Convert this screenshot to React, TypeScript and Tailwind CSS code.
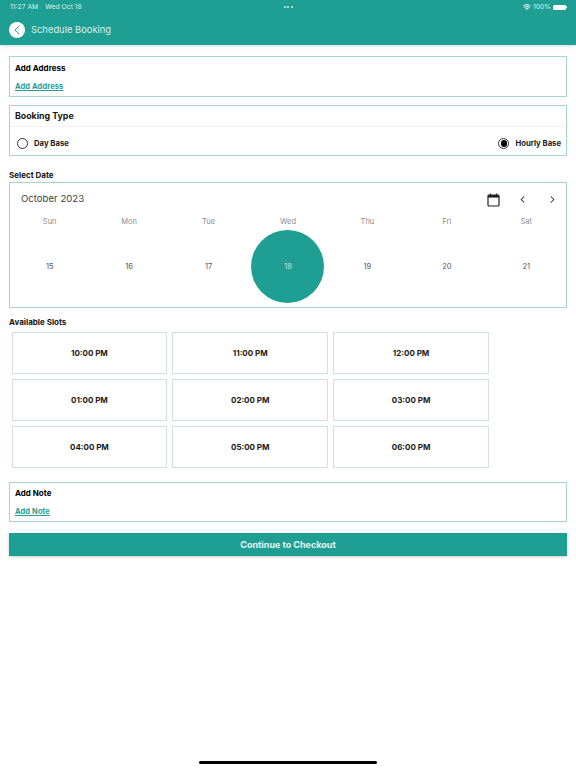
import { ChevronLeft, ChevronRight, Wifi } from "lucide-react";

const days = [
  { name: "Sun", date: "15" },
  { name: "Mon", date: "16" },
  { name: "Tue", date: "17" },
  { name: "Wed", date: "18", selected: true },
  { name: "Thu", date: "19" },
  { name: "Fri", date: "20" },
  { name: "Sat", date: "21" },
];

const slots = [
  "10:00 PM",
  "11:00 PM",
  "12:00 PM",
  "01:00 PM",
  "02:00 PM",
  "03:00 PM",
  "04:00 PM",
  "05:00 PM",
  "06:00 PM",
];

function AddBox({ title, link, className }: { title: string; link: string; className: string }) {
  return (
    <div className={`border border-[#a5d5cd] px-[5px] ${className}`}>
      <p className="text-[8px] font-bold leading-[10px] text-black">{title}</p>
      <p className="mt-[9px] text-[7.5px] font-bold leading-[10px] tracking-[0.1px] text-[#2a9d94] underline">{link}</p>
    </div>
  );
}

function Radio({ label, checked }: { label: string; checked?: boolean }) {
  return (
    <div className="flex items-center gap-[6px]">
      <span className="flex h-[11px] w-[11px] items-center justify-center rounded-full border border-[#333333]">
        {checked && <span className="h-[6.5px] w-[6.5px] rounded-full bg-black" />}
      </span>
      <span className="text-[7.7px] font-bold text-[#1a1a1a]">{label}</span>
    </div>
  );
}

function CalendarIcon() {
  return (
    <svg width="13" height="14" viewBox="0 0 13 14" fill="none">
      <rect x="1" y="2" width="11" height="11" rx="1" stroke="#222222" strokeWidth="1.2" />
      <rect x="1" y="2" width="11" height="2.6" fill="#222222" />
      <path d="M3.5 0.6v2M9.5 0.6v2" stroke="#222222" strokeWidth="1.1" />
    </svg>
  );
}

export default function App() {
  return (
    <div className="relative flex h-[768px] w-[576px] flex-col overflow-hidden bg-white font-['Inter',sans-serif]">
      <header className="h-[45px] shrink-0 bg-[#1f9e94] shadow-[0_1px_3px_rgba(31,158,148,0.3)]">
        <div className="grid h-[14px] grid-cols-3 items-center pl-[10px] pr-[9px] text-[6.8px] text-[#d8f1ee]">
          <div className="flex gap-[7px]">
            <span>11:27 AM</span>
            <span>Wed Oct 18</span>
          </div>
          <div className="flex justify-center gap-[1.5px]">
            <span className="h-[2px] w-[2px] rounded-full bg-[#d8f1ee]" />
            <span className="h-[2px] w-[2px] rounded-full bg-[#d8f1ee]" />
            <span className="h-[2px] w-[2px] rounded-full bg-[#d8f1ee]" />
          </div>
          <div className="flex items-center justify-end gap-[2px]">
            <Wifi size={8} strokeWidth={3} className="text-white" />
            <span>100%</span>
            <span className="flex items-center">
              <span className="h-[5px] w-[13px] rounded-[1.5px] bg-white" />
              <span className="h-[2px] w-[1px] bg-[#d8f1ee]" />
            </span>
          </div>
        </div>
        <div className="flex items-center gap-[6px] pl-[9px] pt-[8px]">
          <span className="flex h-[16px] w-[16px] items-center justify-center rounded-full bg-white">
            <ChevronLeft size={16} strokeWidth={1.4} className="text-[#1f9e94]" />
          </span>
          <h1 className="text-[9.4px] text-[#d5f1ee]">Schedule Booking</h1>
        </div>
      </header>

      <main className="flex flex-col px-[9px]">
        <AddBox title="Add Address" link="Add Address" className="mt-[11px] h-[41px] pt-[6px]" />

        <section className="mt-[8px] h-[51px] border border-[#a5d5cd]">
          <h2 className="flex h-[21px] items-center border-b border-[#eef2f1] px-[5px] text-[8.8px] font-bold text-[#141414]">
            Booking Type
          </h2>
          <div className="flex h-[28px] items-center justify-between pl-[7px] pr-[5px] pt-[5px]">
            <Radio label="Day Base" />
            <Radio label="Hourly Base" checked />
          </div>
        </section>

        <h2 className="mt-[14px] h-[12px] text-[8px] font-bold leading-[10px] text-[#141414]">Select Date</h2>
        <section className="h-[126px] border border-[#a5d5cd]">
          <div className="flex h-[30px] items-center pl-[11px] pr-[8px] pt-[3px]">
            <span className="text-[9.6px] text-[#444444]">October 2023</span>
            <span className="ml-auto">
              <CalendarIcon />
            </span>
            <ChevronLeft size={11} strokeWidth={2.2} className="ml-[17px] text-[#222222]" />
            <ChevronRight size={11} strokeWidth={2.2} className="ml-[19px] text-[#222222]" />
          </div>
          <div className="grid grid-cols-7">
            {days.map((d) => (
              <div key={d.name} className="flex flex-col items-center">
                <span className="mt-[4px] h-[13px] text-[7.5px] leading-[10px] text-[#8c8c8c]">{d.name}</span>
                <span
                  className={`flex h-[73px] w-[73px] items-center justify-center rounded-full text-[7.5px] ${
                    d.selected ? "bg-[#1f9e94] text-[#bfe8e3]" : "text-[#555555]"
                  }`}
                >
                  {d.date}
                </span>
              </div>
            ))}
          </div>
        </section>

        <h2 className="mt-[9px] h-[15px] text-[8px] font-bold leading-[10px] text-[#141414]">Available Slots</h2>
        <div className="ml-[2.5px] grid w-[477.5px] grid-cols-3 gap-x-[5px] gap-y-[5px]">
          {slots.map((s) => (
            <div
              key={s}
              className="flex h-[42px] items-center justify-center border border-[#cfe3e1] text-[8px] font-bold text-[#1a1a1a]"
            >
              {s}
            </div>
          ))}
        </div>

        <AddBox title="Add Note" link="Add Note" className="mt-[14px] h-[40px] pt-[5px]" />

        <button className="mt-[11px] h-[23px] w-full bg-[#1f9e94] text-[9px] font-bold text-[#e4f6f4] shadow-[0_1px_3px_rgba(0,0,0,0.2)]">
          Continue to Checkout
        </button>
      </main>

      <div className="absolute bottom-[4px] left-[199px] h-[3px] w-[178px] rounded-full bg-black" />
    </div>
  );
}
